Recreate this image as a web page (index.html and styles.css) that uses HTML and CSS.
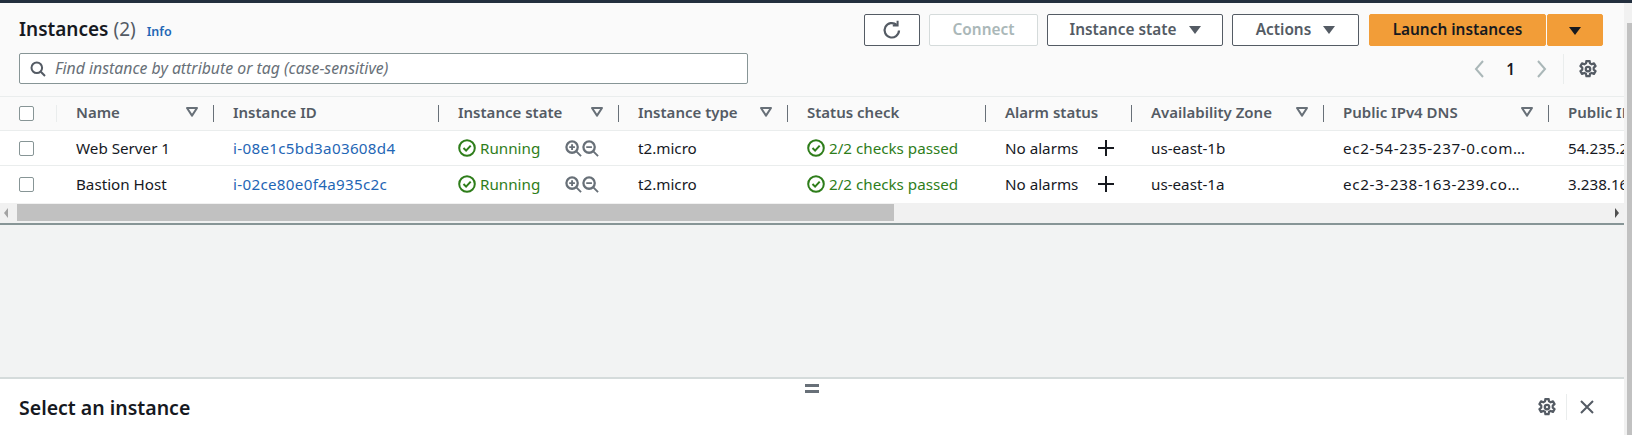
FILE: index.html
```html
<!DOCTYPE html>
<html lang="en">

<head>
  <meta charset="UTF-8">
  <meta name="viewport" content="width=device-width">
  <title>Instances</title>
  <link rel="stylesheet" href="styles.css">
</head>

<body>

  <div class="topline"></div>

  <div class="page">
    <main class="main">

      <section class="list">
        <div class="list-head">
          <h1>Instances <span class="count">(2)</span> <a class="info" href="#">Info</a></h1>
          <div class="actions">
            <button class="btn btn-icon" type="button">
              <svg width="20" height="20" viewBox="0 0 20 20" fill="none" stroke="#545b64" stroke-width="2.2"><path d="M17 10.5a7.2 7.2 0 1 1-2.4-5.6"/><path d="M15.6.8v4.8h-4.8" stroke-width="2"/></svg>
            </button>
            <button class="btn btn-disabled" type="button">Connect</button>
            <button class="btn btn-state" type="button">Instance state <span class="caret"></span></button>
            <button class="btn btn-actions" type="button">Actions <span class="caret"></span></button>
            <div class="launch">
              <button class="btn btn-primary btn-launch" type="button">Launch instances</button>
              <button class="btn btn-primary btn-more" type="button"><span class="caret caret-dark"></span></button>
            </div>
          </div>
        </div>

        <div class="list-tools">
          <label class="search">
            <svg width="16" height="16" viewBox="0 0 16 16" fill="none" stroke="#545b64" stroke-width="2"><circle cx="6.8" cy="6.8" r="5.3"/><path d="M10.8 10.8 15 15"/></svg>
            <input type="text" placeholder="Find instance by attribute or tag (case-sensitive)">
          </label>
          <div class="pager">
            <svg width="10" height="18" viewBox="0 0 10 18" fill="none" stroke="#aab7b8" stroke-width="2"><path d="M9 1 2 9l7 8"/></svg>
            <span class="page-num">1</span>
            <svg width="10" height="18" viewBox="0 0 10 18" fill="none" stroke="#aab7b8" stroke-width="2"><path d="m1 1 7 8-7 8"/></svg>
            <span class="pager-gear">
              <svg width="18" height="18" viewBox="0 0 18 18"><use href="#gear"/></svg>
            </span>
          </div>
        </div>

        <table class="grid">
          <colgroup>
            <col class="c-check"><col class="c-name"><col class="c-id"><col class="c-state"><col class="c-type">
            <col class="c-status"><col class="c-alarm"><col class="c-zone"><col class="c-dns"><col class="c-ip">
          </colgroup>
          <thead>
            <tr>
              <th class="cell-check"><span class="checkbox"></span></th>
              <th><div class="th-in">Name <svg width="12" height="10" viewBox="0 0 12 10"><use href="#filter"/></svg></div></th>
              <th>Instance ID</th>
              <th><div class="th-in">Instance state <svg width="12" height="10" viewBox="0 0 12 10"><use href="#filter"/></svg></div></th>
              <th><div class="th-in">Instance type <svg width="12" height="10" viewBox="0 0 12 10"><use href="#filter"/></svg></div></th>
              <th>Status check</th>
              <th>Alarm status</th>
              <th><div class="th-in">Availability Zone <svg width="12" height="10" viewBox="0 0 12 10"><use href="#filter"/></svg></div></th>
              <th><div class="th-in">Public IPv4 DNS <svg width="12" height="10" viewBox="0 0 12 10"><use href="#filter"/></svg></div></th>
              <th class="last">Public IPv4 address</th>
            </tr>
          </thead>
          <tbody>
            <tr>
              <td class="cell-check"><span class="checkbox"></span></td>
              <td>Web Server 1</td>
              <td><a href="#">i-08e1c5bd3a03608d4</a></td>
              <td>
                <div class="state">
                  <span class="ok"><svg width="18" height="18" viewBox="0 0 18 18"><use href="#check"/></svg>Running</span>
                  <span class="zooms"><svg width="17" height="17" viewBox="0 0 18 18"><use href="#zoom-in"/></svg><svg width="17" height="17" viewBox="0 0 18 18"><use href="#zoom-out"/></svg></span>
                </div>
              </td>
              <td>t2.micro</td>
              <td><span class="ok"><svg width="18" height="18" viewBox="0 0 18 18"><use href="#check"/></svg>2/2 checks passed</span></td>
              <td>
                <div class="alarm">No alarms <svg width="18" height="18" viewBox="0 0 18 18"><path d="M9 1v16M1 9h16" stroke="#16191f" stroke-width="2"/></svg></div>
              </td>
              <td>us-east-1b</td>
              <td class="dns">ec2-54-235-237-0.com…</td>
              <td class="last">54.235.237.0</td>
            </tr>
            <tr>
              <td class="cell-check"><span class="checkbox"></span></td>
              <td>Bastion Host</td>
              <td><a href="#">i-02ce80e0f4a935c2c</a></td>
              <td>
                <div class="state">
                  <span class="ok"><svg width="18" height="18" viewBox="0 0 18 18"><use href="#check"/></svg>Running</span>
                  <span class="zooms"><svg width="17" height="17" viewBox="0 0 18 18"><use href="#zoom-in"/></svg><svg width="17" height="17" viewBox="0 0 18 18"><use href="#zoom-out"/></svg></span>
                </div>
              </td>
              <td>t2.micro</td>
              <td><span class="ok"><svg width="18" height="18" viewBox="0 0 18 18"><use href="#check"/></svg>2/2 checks passed</span></td>
              <td>
                <div class="alarm">No alarms <svg width="18" height="18" viewBox="0 0 18 18"><path d="M9 1v16M1 9h16" stroke="#16191f" stroke-width="2"/></svg></div>
              </td>
              <td>us-east-1a</td>
              <td class="dns">ec2-3-238-163-239.co…</td>
              <td class="last">3.238.163.239</td>
            </tr>
          </tbody>
        </table>

        <div class="hscroll">
          <span class="arrow arrow-left"></span>
          <span class="thumb"></span>
          <span class="arrow arrow-right"></span>
        </div>
      </section>

      <section class="detail">
        <div class="handle"></div>
        <div class="detail-head">
          <h2>Select an instance</h2>
          <div class="detail-tools">
            <svg width="18" height="18" viewBox="0 0 18 18"><use href="#gear"/></svg>
            <span class="detail-close">
              <svg width="14" height="14" viewBox="0 0 14 14" stroke="#545b64" stroke-width="2"><path d="m1 1 12 12M13 1 1 13"/></svg>
            </span>
          </div>
        </div>
      </section>

    </main>

    <div class="vscroll"><span class="vthumb"></span></div>
  </div>

  <svg class="defs" width="0" height="0">
    <symbol id="gear" viewBox="1 .6 16 16">
      <path d="M7.6 1.5h2.8l.4 2.1 1.5.8 2-.8 1.4 2.4-1.6 1.4v1.7l1.6 1.4-1.4 2.4-2-.8-1.5.8-.4 2.1H7.6l-.4-2.1-1.5-.8-2 .8-1.4-2.4 1.6-1.4V7.4L2.3 6l1.4-2.4 2 .8 1.5-.8z" fill="none" stroke="#545b64" stroke-width="2" stroke-linejoin="round"/>
      <circle cx="9" cy="8.6" r="2" fill="none" stroke="#545b64" stroke-width="2"/>
    </symbol>
    <symbol id="filter" viewBox="0 0 12 10">
      <path d="M1 1h10L6 8.6z" fill="none" stroke="#687078" stroke-width="2" stroke-linejoin="round"/>
    </symbol>
    <symbol id="check" viewBox="0 0 18 18">
      <circle cx="9" cy="9" r="7.8" fill="none" stroke="#2e7d1a" stroke-width="2"/>
      <path d="m5.5 9 2.6 2.6 4.6-5" fill="none" stroke="#2e7d1a" stroke-width="2"/>
    </symbol>
    <symbol id="zoom-in" viewBox="0 0 18 18">
      <circle cx="7.5" cy="7.5" r="6" fill="none" stroke="#687078" stroke-width="2.4"/>
      <path d="M12 12l5 5M4.5 7.5h6M7.5 4.5v6" fill="none" stroke="#687078" stroke-width="2"/>
    </symbol>
    <symbol id="zoom-out" viewBox="0 0 18 18">
      <circle cx="7.5" cy="7.5" r="6" fill="none" stroke="#687078" stroke-width="2.4"/>
      <path d="M12 12l5 5M4.5 7.5h6" fill="none" stroke="#687078" stroke-width="2"/>
    </symbol>
  </svg>

</body>

</html>
```

FILE: styles.css
```css
* {
  box-sizing: border-box;
  margin: 0;
  padding: 0;
}

html,
body {
  height: 100%;
  overflow: hidden;
}

body {
  font-family: "Noto Sans", Arial, sans-serif;
  font-size: 15.2px;
  color: #16191f;
  background-color: #f2f3f3;
  display: flex;
  flex-direction: column;
}

a {
  color: #1f66b5;
  text-decoration: none;
}

.defs {
  position: absolute;
}

.topline {
  height: 3px;
  background-color: #232f3e;
}

.page {
  flex: 1;
  display: flex;
  min-height: 0;
}

.main {
  flex: 1;
  min-width: 0;
  display: flex;
  flex-direction: column;
  justify-content: space-between;
}

/* instances list */
.list {
  background-color: #fafafa;
  overflow: hidden;
}

.list-head {
  display: flex;
  justify-content: space-between;
  padding: 11px 21px 0 19px;
}

h1 {
  font-size: 19px;
  font-weight: 600;
  line-height: 30px;
}

.count {
  font-weight: 400;
  color: #545b64;
}

.info {
  font-size: 12.5px;
  font-weight: 600;
  margin-left: 6px;
}

.actions {
  display: flex;
  gap: 9px;
}

.btn {
  font-family: inherit;
  font-size: 15.4px;
  font-weight: 600;
  height: 32px;
  padding-bottom: 2px;
  color: #545b64;
  background-color: #ffffff;
  border: 1px solid #545b64;
  border-radius: 2px;
  display: flex;
  align-items: center;
  justify-content: center;
}

.btn-icon {
  width: 56px;
  padding-bottom: 0;
}

.btn-disabled {
  width: 109px;
  color: #aab7b8;
  border-color: #d5dbdb;
}

.btn-state {
  width: 176px;
  gap: 12px;
}

.btn-actions {
  width: 127px;
  gap: 12px;
}

.btn-primary {
  color: #16191f;
  background-color: #f29d38;
  border-color: #f29d38;
}

.launch {
  display: flex;
  gap: 1px;
  margin-left: 1px;
}

.btn-launch {
  width: 177px;
}

.btn-more {
  width: 56px;
  padding-bottom: 0;
}

.caret {
  width: 0;
  height: 0;
  margin-top: 2px;
  border-left: 6px solid transparent;
  border-right: 6px solid transparent;
  border-top: 8px solid #545b64;
}

.caret-dark {
  border-top-color: #16191f;
}

.list-tools {
  display: flex;
  justify-content: space-between;
  height: 49px;
  padding: 6px 0 0 19px;
}

.search {
  width: 729px;
  height: 31px;
  display: flex;
  align-items: center;
  gap: 9px;
  padding-left: 10px;
  padding-bottom: 1px;
  background-color: #ffffff;
  border: 1px solid #879596;
  border-radius: 2px;
}

.search svg {
  margin-top: 1px;
}

.search input {
  flex: 1;
  border: none;
  outline: none;
  font-family: inherit;
  font-size: 15.8px;
  font-style: italic;
  background: transparent;
}

.search input::placeholder {
  color: #687078;
  opacity: 1;
}

.pager {
  display: flex;
  align-items: center;
  height: 31px;
  padding-right: 27px;
}

.page-num {
  font-weight: 600;
  width: 53px;
  text-align: center;
}

.pager-gear {
  display: flex;
  margin-left: 16px;
  padding: 6px 0 6px 15px;
  border-left: 1px solid #eaeded;
}

/* table */
.grid {
  width: 100%;
  table-layout: fixed;
  border-collapse: collapse;
  border-top: 1px solid #eaeded;
}

.c-check { width: 57px; }
.c-name { width: 157px; }
.c-id { width: 225px; }
.c-state { width: 180px; }
.c-type { width: 169px; }
.c-status { width: 198px; }
.c-alarm { width: 146px; }
.c-zone { width: 192px; }
.c-dns { width: 225px; }
.c-ip { width: 75px; }

th {
  height: 34px;
  padding-left: 19px;
  padding-bottom: 3px;
  text-align: left;
  font-size: 15px;
  font-weight: 600;
  color: #545b64;
  white-space: nowrap;
  overflow: hidden;
  background-color: #fafafa;
  border-bottom: 1px solid #eaeded;
  background-image: linear-gradient(#687078, #687078);
  background-size: 1px 17px;
  background-position: right center;
  background-repeat: no-repeat;
}

.th-in {
  display: flex;
  align-items: center;
  justify-content: space-between;
  padding-right: 16px;
}

th.cell-check {
  padding-bottom: 0;
  background-image: linear-gradient(#eaeded, #eaeded);
}

th.last {
  background-image: none;
}

td {
  height: 35px;
  padding-left: 19px;
  white-space: nowrap;
  overflow: hidden;
  background-color: #ffffff;
  border-bottom: 1px solid #eaeded;
}

td a {
  letter-spacing: 0.3px;
}

.dns {
  letter-spacing: 0.65px;
}

tbody tr:last-child td {
  height: 37px;
  border-bottom: none;
}

.checkbox {
  display: block;
  width: 15px;
  height: 15px;
  background-color: #ffffff;
  border: 1px solid #879596;
  border-radius: 2px;
}

.ok {
  display: flex;
  align-items: center;
  gap: 4px;
  color: #2e7d1a;
}

.state {
  display: flex;
  justify-content: space-between;
  padding-right: 20px;
}

.zooms {
  display: flex;
  align-items: center;
}

.alarm {
  display: flex;
  align-items: center;
  gap: 19px;
}

/* table scrollbar */
.hscroll {
  height: 22px;
  display: flex;
  align-items: center;
  background-color: #f1f1f1;
  border-bottom: 2px solid #879596;
  padding-left: 4px;
}

.thumb {
  width: 877px;
  height: 17px;
  margin-left: 9px;
  background-color: #c1c1c1;
}

.arrow {
  width: 0;
  height: 0;
  border-top: 5px solid transparent;
  border-bottom: 5px solid transparent;
}

.arrow-left {
  border-right: 4px solid #a3a3a3;
}

.arrow-right {
  margin-left: auto;
  margin-right: 5px;
  border-left: 4px solid #505050;
}

/* split panel */
.detail {
  height: 58px;
  background-color: #ffffff;
  border-top: 2px solid #d5dbdb;
  position: relative;
  overflow: hidden;
}

.handle {
  position: absolute;
  left: 805px;
  top: 5px;
  width: 14px;
  height: 9px;
  border-top: 3px solid #687078;
  border-bottom: 3px solid #687078;
}

.detail-head {
  display: flex;
  justify-content: space-between;
  align-items: center;
  height: 56px;
  padding: 0 30px 0 19px;
}

h2 {
  font-size: 19.5px;
  font-weight: 600;
}

.detail-tools {
  display: flex;
  align-items: center;
  gap: 10px;
}

.detail-close {
  display: flex;
  padding: 6px 0 6px 13px;
  border-left: 1px solid #eaeded;
}

/* page scrollbar */
.vscroll {
  width: 8px;
  background-color: #f1f1f1;
  padding-top: 20px;
  padding-left: 3px;
}

.vthumb {
  display: block;
  height: 100%;
  background-color: #c1c1c1;
}
```
